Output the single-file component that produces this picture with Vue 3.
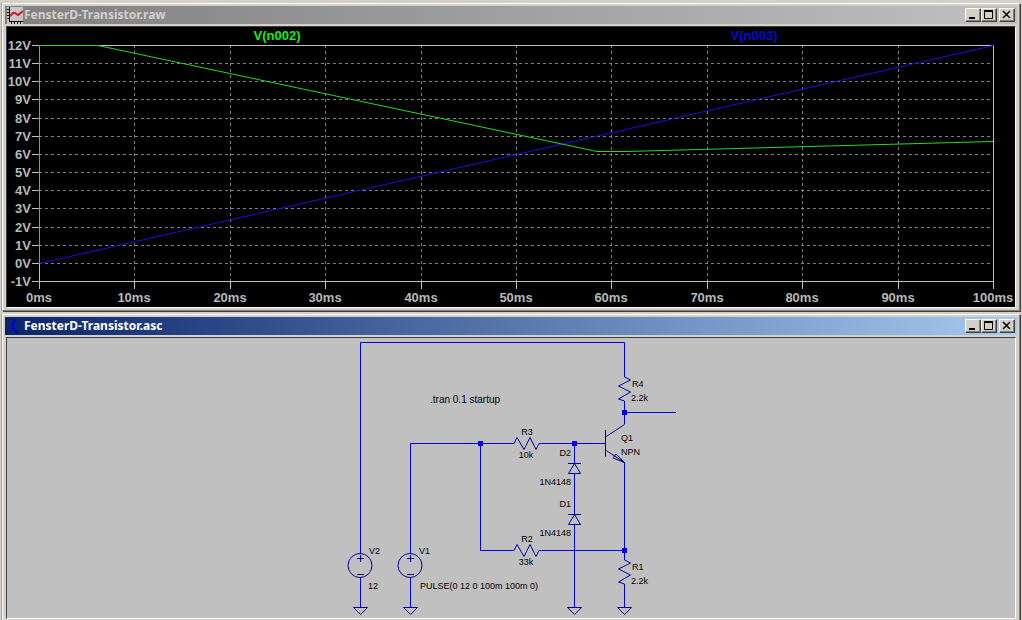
<script setup>
const xTicks = [39, 134, 230, 325, 421, 516, 611, 707, 802, 898, 993].map((x, i) => ({ x, label: `${i * 10}ms` }))
const yTicks = [45, 63, 81, 99, 118, 136, 154, 172, 190, 208, 227, 245, 263, 281].map((y, i) => ({ y, label: `${12 - i}V` }))

const resistorsH = [
  { y: 443, name: 'R3', value: '10k' },
  { y: 550, name: 'R2', value: '33k' },
]
const resistorsV = [
  { y: 377, name: 'R4', value: '2.2k' },
  { y: 560, name: 'R1', value: '2.2k' },
]
const diodes = [
  { y: 463, name: 'D2' },
  { y: 514, name: 'D1' },
]
const sources = [
  { x: 360, name: 'V2', value: '12', dx: 8 },
  { x: 410, name: 'V1', value: 'PULSE(0 12 0 100m 100m 0)', dx: 10 },
]
const grounds = [360, 410, 574, 624]
const junctions = [[480, 443], [574, 443], [624, 412], [624, 550]]
</script>

<template>
  <main class="desktop">
    <section class="window">
      <header class="titlebar inactive">
        <svg class="app-icon" viewBox="0 0 16 17" aria-hidden="true">
          <rect width="16" height="17" fill="#c8c6c4" />
          <path d="M2.5 0V15M2 14.5H16M0 2.5H2M0 5.5H2M0 8.5H2M0 11.5H2M4.5 15V17M7.5 15V17M10.5 15V17M13.5 15V17" stroke="#000" fill="none" />
          <path d="M3 9L6 6L8 6L11 8L16 4" stroke="#d01830" stroke-width="2" fill="none" />
        </svg>
        <h1>FensterD-Transistor.raw</h1>
        <div class="controls">
          <button type="button" aria-label="Minimize"><svg viewBox="0 0 12 10"><path d="M2 8H8" stroke="#000" stroke-width="2" /></svg></button>
          <button type="button" aria-label="Maximize"><svg viewBox="0 0 12 10"><path d="M1.5 1V8.5H9.5V1" stroke="#000" fill="none" /><path d="M1 1H10" stroke="#000" stroke-width="2" /></svg></button>
          <button type="button" aria-label="Close" class="close"><svg viewBox="0 0 12 10"><path d="M2 1L9 8M9 1L2 8" stroke="#000" stroke-width="1.5" /></svg></button>
        </div>
      </header>
      <div class="client plot">
        <svg viewBox="7 27 1008 280" role="img" aria-label="V(n002), V(n003)">
          <g class="grid">
            <path v-for="t in xTicks.slice(1, -1)" :key="t.x" :d="`M${t.x + 0.5} 45V281`" />
            <path v-for="t in yTicks.slice(1, -1)" :key="t.y" :d="`M39 ${t.y + 0.5}H993`" />
          </g>
          <g class="axis">
            <path d="M98 45.5H993.5V281.5H39.5V263" />
            <path v-for="t in xTicks" :key="t.x" :d="`M${t.x + 0.5} 281V289`" />
            <path v-for="t in yTicks" :key="t.y" :d="`M32 ${t.y + 0.5}H39`" />
          </g>
          <path class="trace blue" d="M39.5 263.5L993.5 45.5" />
          <path class="trace green" d="M39.5 263V45.5H98L597 151.5H626L993 141.5" />
          <g class="axis-text">
            <text v-for="t in yTicks" :key="t.y" x="31" :y="t.y + 5" text-anchor="end">{{ t.label }}</text>
            <text v-for="t in xTicks" :key="t.x" :x="t.x" y="302" text-anchor="middle">{{ t.label }}</text>
            <text class="green-text" x="277" y="40" text-anchor="middle">V(n002)</text>
            <text class="blue-text" x="754" y="40" text-anchor="middle">V(n003)</text>
          </g>
        </svg>
      </div>
    </section>

    <section class="window">
      <header class="titlebar active">
        <svg class="app-icon" viewBox="0 0 16 17" aria-hidden="true">
          <path d="M9 2L6 5V10L11 15" stroke="#0000f0" stroke-width="2" fill="none" />
        </svg>
        <h1>FensterD-Transistor.asc</h1>
        <div class="controls">
          <button type="button" aria-label="Minimize"><svg viewBox="0 0 12 10"><path d="M2 8H8" stroke="#000" stroke-width="2" /></svg></button>
          <button type="button" aria-label="Maximize"><svg viewBox="0 0 12 10"><path d="M1.5 1V8.5H9.5V1" stroke="#000" fill="none" /><path d="M1 1H10" stroke="#000" stroke-width="2" /></svg></button>
          <button type="button" aria-label="Close" class="close"><svg viewBox="0 0 12 10"><path d="M2 1L9 8M9 1L2 8" stroke="#000" stroke-width="1.5" /></svg></button>
        </div>
      </header>
      <div class="client schematic">
        <svg viewBox="7 338 1008 280" role="img" aria-label="Transistor circuit">
          <g class="wire">
            <path d="M360.5 553V342.5H624.5V377M624.5 403V424M624 412.5H676" />
            <path d="M410.5 553V443.5H514M539 443.5H605M480.5 443V550.5H514M539 550.5H624" />
            <path d="M574.5 443V607M624.5 462V560M624.5 586V607M360.5 578V607M410.5 578V607" />
          </g>
          <rect v-for="[x, y] in junctions" :key="`${x}-${y}`" class="junction" :x="x - 2" :y="y - 2" width="5" height="5" />
          <g class="symbol">
            <path v-for="r in resistorsH" :key="r.name" :d="`M513 ${r.y + 0.5}h1l3 -6l7 12l6 -12l6 12l3 -6h1`" />
            <path v-for="r in resistorsV" :key="r.name" :d="`M624.5 ${r.y}l6 3l-12 6l12 6l-12 7l6 2v2`" />
            <g v-for="d in diodes" :key="d.name">
              <path class="gap" :d="`M574.5 ${d.y + 1}v9`" />
              <path :d="`M568 ${d.y + 0.5}h13M574.5 ${d.y + 0.5}l-6 10h12z`" />
            </g>
            <path v-for="x in grounds" :key="x" :d="`M${x - 6.5} 607.5h14l-7 7z`" />
            <g v-for="s in sources" :key="s.name">
              <circle :cx="s.x" cy="565.5" r="12" />
              <path :d="`M${s.x - 3} 558.5h7M${s.x + 0.5} 555v7M${s.x - 3} 574.5h7`" />
            </g>
            <path d="M605.5 430V457M605.5 437L624.5 424.5M605.5 450L624.5 462.5M616 454L613 458L624.5 462.5L616 454" />
          </g>
          <g class="label">
            <text class="directive" x="430" y="403">.tran 0.1 startup</text>
            <g v-for="r in resistorsH" :key="r.name" text-anchor="middle">
              <text x="527" :y="r.y - 8">{{ r.name }}</text>
              <text x="526" :y="r.y + 15">{{ r.value }}</text>
            </g>
            <g v-for="r in resistorsV" :key="r.name">
              <text x="632" :y="r.y + 10">{{ r.name }}</text>
              <text x="631" :y="r.y + 24">{{ r.value }}</text>
            </g>
            <g v-for="d in diodes" :key="d.name" text-anchor="end">
              <text x="571" :y="d.y - 7">{{ d.name }}</text>
              <text x="571" :y="d.y + 22">1N4148</text>
            </g>
            <g v-for="s in sources" :key="s.name">
              <text :x="s.x + 9" y="554">{{ s.name }}</text>
              <text :x="s.x + s.dx" y="589">{{ s.value }}</text>
            </g>
            <text x="621" y="441">Q1</text>
            <text x="621" y="455">NPN</text>
          </g>
        </svg>
      </div>
    </section>
  </main>
</template>

<style>
body { margin: 0; background: #d4d0c8; }
</style>

<style scoped>
.desktop {
  display: flex;
  flex-direction: column;
  gap: 3px;
  padding: 3px 2px 0;
  height: 100vh;
  box-sizing: border-box;
  overflow: hidden;
  font-family: "Liberation Sans", Arial, sans-serif;
}
.window {
  flex: none;
  padding: 2px;
  background: #d4d0c8;
  border: 1px solid #fff;
  border-right-color: #808080;
  border-bottom-color: #808080;
  box-shadow: 1px 1px #404040, -1px 0 #a0a0a0;
}
.titlebar {
  display: flex;
  align-items: center;
  height: 18px;
  padding-right: 2px;
}
.inactive { background: linear-gradient(90deg, #808080, #c0c0c0); color: #d4d0c8; }
.active { background: linear-gradient(90deg, #0a246a, #a6caf0); color: #fff; }
.app-icon { flex: none; width: 16px; height: 17px; margin-left: 2px; }
h1 {
  flex: 1;
  margin: 0 0 0 1px;
  font: bold 12px/18px "Noto Sans", "DejaVu Sans", sans-serif;
  white-space: nowrap;
}
.controls { display: flex; }
button {
  width: 16px;
  height: 14px;
  padding: 1px;
  box-sizing: border-box;
  border: 1px solid #fff;
  border-right-color: #404040;
  border-bottom-color: #404040;
  background: #d4d0c8;
  box-shadow: inset -1px -1px #808080;
  line-height: 0;
}
button svg { width: 12px; height: 10px; }
.close { margin-left: 2px; }
.client {
  margin: 2px 1px 0;
  border: 1px solid #404040;
  border-right-color: #fff;
  border-bottom-color: #fff;
}
.client > svg { display: block; width: 100%; height: auto; }
.plot { background: #000; }
.schematic { background: #c0c0c0; }
.grid path { stroke: #808080; stroke-dasharray: 3 3; }
.axis path { stroke: #c0c0c0; fill: none; }
.trace { fill: none; }
.green { stroke: #28d828; }
.blue { stroke: #1414d8; }
.axis-text { font-size: 13px; font-weight: bold; fill: #b8b8b8; }
.axis-text .green-text { fill: #10f010; }
.axis-text .blue-text { fill: #0808d8; }
.wire path { stroke: #0000d8; fill: none; }
.junction { fill: #0000f0; }
.symbol path, .symbol circle { stroke: #000098; fill: none; }
.symbol .gap { stroke: #c0c0c0; }
.label { font-size: 9px; fill: #000; }
.directive { font-size: 10px; }
</style>
